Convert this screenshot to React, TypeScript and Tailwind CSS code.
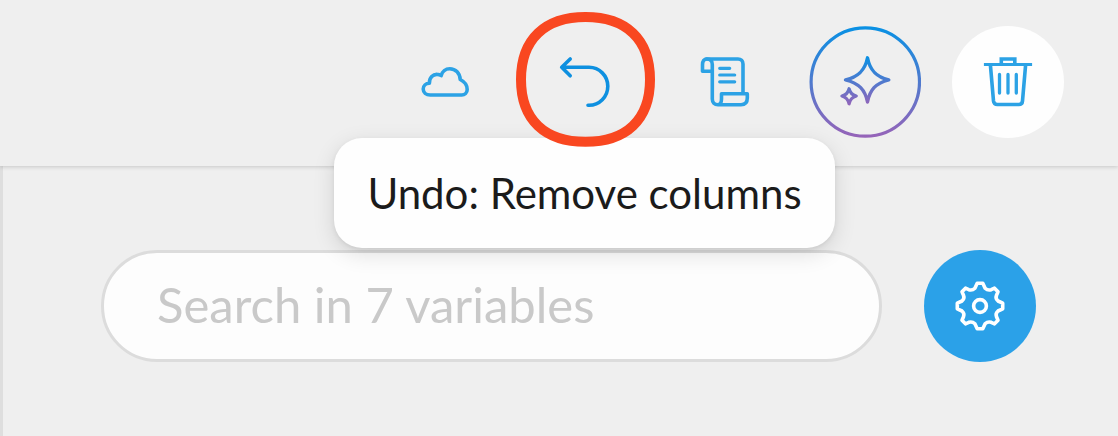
import type { ReactNode } from "react";

function ToolButton({ label, className = "", children }: { label: string; className?: string; children: ReactNode }) {
  return (
    <button aria-label={label} className={`flex size-28 shrink-0 items-center justify-center rounded-full ${className}`}>
      {children}
    </button>
  );
}

function Icon({ children }: { children: ReactNode }) {
  return (
    <svg
      viewBox="0 0 112 112"
      className="size-28"
      fill="none"
      stroke="currentColor"
      strokeWidth="3.6"
      strokeLinecap="round"
      strokeLinejoin="round"
    >
      {children}
    </svg>
  );
}

function CloudIcon() {
  return (
    <Icon>
      <path
        transform="translate(0.7 0)"
        d="M41.5 69C37.5 69 34.5 66.5 34.5 63C34.5 59.8 37 57.3 40.7 57.2C40.5 51.5 44.5 48.2 48.5 48.4C50.3 48.4 51.5 48.9 52.5 49.6C53.5 45.5 57 42.7 61 42.7C67 42.7 71.3 47.5 71.5 53.5C75.5 55.5 78.5 59.5 78.5 63.5C78.5 66.8 76 69 73 69Z"
      />
    </Icon>
  );
}

function UndoIcon() {
  return (
    <Icon>
      <path d="M42.2 33L33.7 41.3L42.2 49.8M34.5 41.3H61A18.8 19 0 0 1 61 79.3H60" />
    </Icon>
  );
}

function ScrollIcon() {
  return (
    <Icon>
      <path d="M37.2 33H69C72 33 74 35 74 38V67" />
      <path d="M43.3 45.2H33.5V39C33.5 35.2 35 33 38 33C41.5 33 43.3 35 43.3 38.5V73C43.3 76.5 45.5 78.7 49 78.7H72C76 78.7 78.3 76.5 78.3 72V67.8H52.5V73C52.5 76.5 51 78.7 48.5 78.7" />
      <path d="M50.7 42.3H60.7M50.7 49H65.7M50.7 55.8H65.7" strokeWidth="3.2" />
    </Icon>
  );
}

function SparkleIcon() {
  return (
    <svg viewBox="0 0 112 112" className="size-28" fill="none" strokeLinejoin="round">
      <defs>
        <linearGradient id="ring" gradientUnits="userSpaceOnUse" x1="56" y1="0" x2="56" y2="112">
          <stop stopColor="#0891e4" />
          <stop offset="1" stopColor="#9763b8" />
        </linearGradient>
        <linearGradient id="spark" gradientUnits="userSpaceOnUse" x1="56" y1="30" x2="56" y2="81">
          <stop stopColor="#0891e4" />
          <stop offset="1" stopColor="#9763b8" />
        </linearGradient>
      </defs>
      <circle cx="56.3" cy="56" r="54.2" stroke="url(#ring)" strokeWidth="3.2" />
      <path
        d="M58.5 31.8C60.8 43.5 66.5 50.8 79.8 53.8C66.5 57.2 60.8 64 58.5 76C56.1 64 50.1 57.2 36.5 53.8C50.1 50.8 56.1 43.5 58.5 31.8Z"
        stroke="url(#spark)"
        strokeWidth="3.4"
      />
      <path
        d="M40.1 62.7C41 67 42.8 69 47.3 70C42.8 71.3 41 73.5 40.1 77.8C39.2 73.5 37.4 71.3 32.9 70C37.4 69 39.2 67 40.1 62.7Z"
        stroke="url(#spark)"
        strokeWidth="3.2"
      />
    </svg>
  );
}

function TrashIcon() {
  return (
    <Icon>
      <path d="M33.5 38.5H78.5" strokeLinecap="square" strokeWidth="3.2" />
      <path d="M49.3 38V33H62.8V38" strokeLinejoin="miter" strokeLinecap="butt" />
      <path d="M38.4 39L41.5 75C41.8 77.3 43 78.5 45.3 78.5H66.8C69 78.5 70.3 77.3 70.5 75L73.6 39" />
      <path d="M47.5 48.5V67M56 48.5V67M64.3 48.5V67" strokeWidth="3.3" />
    </Icon>
  );
}

function GearIcon() {
  return (
    <Icon>
      <g transform="translate(56 56)">
        <circle r="6.4" />
        <path d="M-2.8 -22.7H2.8L5.1 -17.8Q7.8 -15.2 11.2 -16.3L14.5 -17.8L18 -14.3L16.5 -10.8Q15.2 -7.5 18 -5L22.7 -2.8V2.8L18 5Q15.2 7.5 16.5 10.8L18 14.3L14.5 17.8L11.2 16.3Q7.8 15.2 5.1 17.8L2.8 22.7H-2.8L-5.1 17.8Q-7.8 15.2 -11.2 16.3L-14.5 17.8L-18 14.3L-16.5 10.8Q-15.2 7.5 -18 5L-22.7 2.8V-2.8L-18 -5Q-15.2 -7.5 -16.5 -10.8L-18 -14.3L-14.5 -17.8L-11.2 -16.3Q-7.8 -15.2 -5.1 -17.8Z" />
      </g>
    </Icon>
  );
}

export default function App() {
  return (
    <div className="relative flex h-[436px] w-[1118px] flex-col overflow-hidden bg-[#efefef] font-['Lato',sans-serif]">
      <header className="z-10 flex h-[166px] shrink-0 items-start justify-end gap-7 bg-[#efefef] pt-[26px] pr-[54px] text-[#2ca2e5] shadow-[0_1px_4px_rgba(0,0,0,0.17)]">
        <ToolButton label="Cloud">
          <CloudIcon />
        </ToolButton>
        <ToolButton label="Undo" className="mr-px text-[#0e90e0]">
          <UndoIcon />
        </ToolButton>
        <ToolButton label="Script">
          <ScrollIcon />
        </ToolButton>
        <ToolButton label="Assistant" className="mr-[3px]">
          <SparkleIcon />
        </ToolButton>
        <ToolButton label="Delete" className="bg-[#fefefe]">
          <TrashIcon />
        </ToolButton>
      </header>

      <main className="flex flex-1 items-start border-l-[3px] border-[#dedede] pt-[84px] pl-[98px]">
        <input
          aria-label="Search"
          placeholder="Search in 7 variables"
          className="h-28 w-[781px] rounded-full border-[3px] border-[#dcdcdc] bg-[#fdfdfd] px-[53px] pb-[4px] text-[49px] outline-none placeholder:text-[#c9c9c9]"
        />
        <button
          aria-label="Settings"
          className="ml-[42px] flex size-28 shrink-0 items-center justify-center rounded-full bg-[#2ba1e8] text-white"
        >
          <GearIcon />
        </button>
      </main>

      <div
        role="tooltip"
        className="absolute top-[138px] left-[334px] z-20 flex h-[110px] w-[501px] items-center justify-center rounded-[28px] bg-[#fefefe] text-[42px] whitespace-nowrap text-[#1b1b1b] shadow-[0_6px_22px_rgba(0,0,0,0.12),0_2px_5px_rgba(0,0,0,0.07)]"
      >
        Undo: Remove columns
      </div>
      <svg
        viewBox="0 0 140 136"
        className="pointer-events-none absolute top-[12px] left-[516px] z-30 h-[136px] w-[140px]"
        fill="none"
        stroke="#f94720"
        strokeWidth="10"
      >
        <path d="M69.5 5C110 5 134 27 134 67.5C134 108 110 129.8 69.5 129.8C29 129.8 5 108 5 67.5C5 27 29 5 69.5 5Z" />
      </svg>
    </div>
  );
}
